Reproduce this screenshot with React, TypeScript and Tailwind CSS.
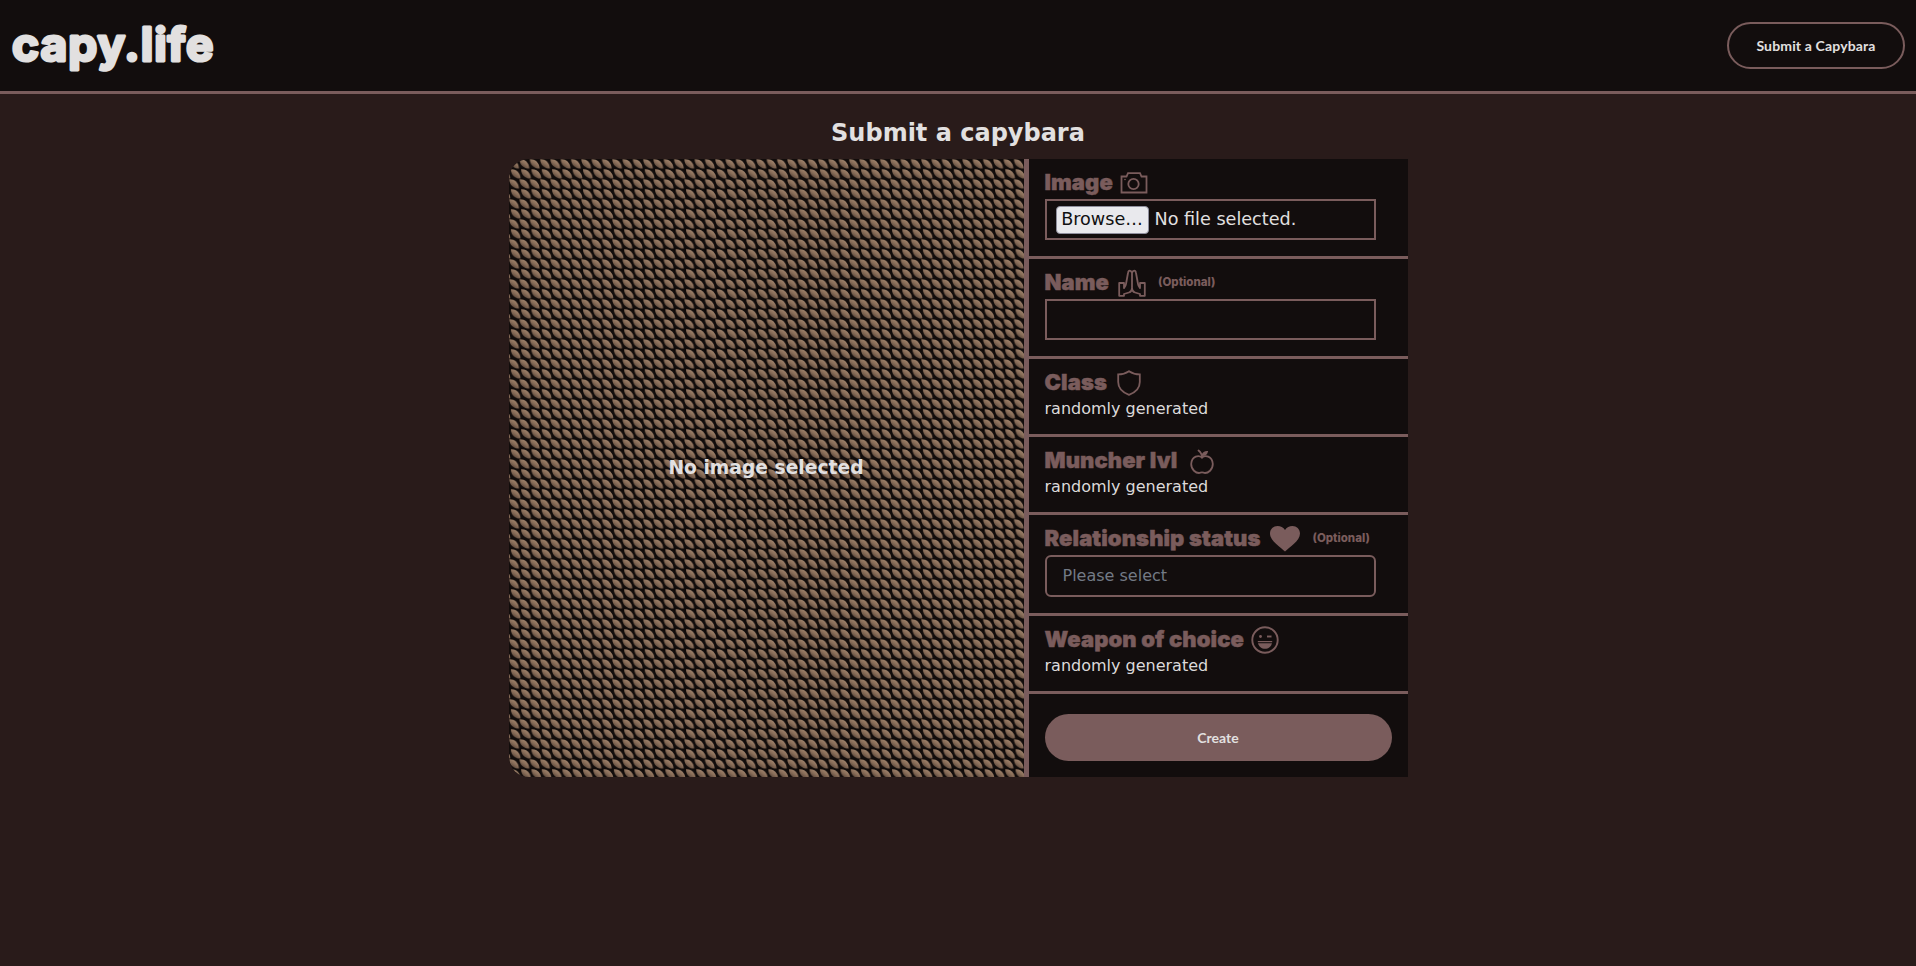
import type { ReactNode } from 'react';

const iconClass = 'text-[#7a5c5c] shrink-0';

function CameraIcon() {
  return (
    <svg width="28" height="22" viewBox="0 0 28 22" fill="none" stroke="currentColor" strokeWidth="1.8" className={`${iconClass} ml-[-3px]`}>
      <path d="M1.5 20.5V4.5H6.5L8 1.2H20L21.5 4.5H26.5V20.5Z" />
      <circle cx="13.5" cy="12" r="5.2" />
      <circle cx="5" cy="7.5" r="0.8" fill="currentColor" stroke="none" />
    </svg>
  );
}

function HandsIcon() {
  return (
    <svg width="28" height="28" viewBox="0 0 28 28" fill="none" stroke="currentColor" strokeWidth="1.8" strokeLinejoin="round" className={`${iconClass} ml-[-1px]`}>
      <path d="M14 4C13 1 10.5 .8 10 4L8 15C7.8 17 7 18 6 19V14H1.2V26.8H6V25L11 23.5C13 23 14 21 14 19Z" />
      <path d="M14 4C15 1 17.5 .8 18 4L20 15C20.2 17 21 18 22 19V14H26.8V26.8H22V25L17 23.5C15 23 14 21 14 19" />
    </svg>
  );
}

function ShieldIcon() {
  return (
    <svg width="24" height="26" viewBox="0 0 24 26" fill="none" stroke="currentColor" strokeWidth="1.8" className={iconClass}>
      <path d="M12 1.2C15 3.2 19 4.4 22.8 4.4V12C22.8 18 18 22.6 12 24.8C6 22.6 1.2 18 1.2 12V4.4C5 4.4 9 3.2 12 1.2Z" />
    </svg>
  );
}

function AppleIcon() {
  return (
    <svg width="24" height="25" viewBox="0 0 24 25" fill="none" stroke="currentColor" strokeWidth="1.8" strokeLinecap="round" className={`${iconClass} ml-[3px]`}>
      <path d="M12 8.5C9 6 1.8 6.5 1.2 15C1.2 21 6 24 9 24C10 24 11 23.4 12 23.4C13 23.4 14 24 15 24C18 24 22.8 21 22.8 15C22.2 6.5 15 6 12 8.5Z" />
      <path d="M12 8.5C12 5.5 10.5 3 8.5 1.5" />
      <path d="M12.5 6C13.5 3.5 15 2.8 17 2.8C16.5 4.8 15 6 12.5 6Z" fill="currentColor" />
    </svg>
  );
}

function HeartIcon() {
  return (
    <svg width="30" height="26" viewBox="0 0 30 26" fill="currentColor" className={iconClass}>
      <path d="M15 25.5C11 21.5 0 15 0 7.5C0 3 3.5 0 7.5 0C10.5 0 13.5 1.5 15 4C16.5 1.5 19.5 0 22.5 0C26.5 0 30 3 30 7.5C30 15 19 21.5 15 25.5Z" />
    </svg>
  );
}

function WinkIcon() {
  return (
    <svg width="28" height="28" viewBox="0 0 28 28" fill="none" stroke="currentColor" strokeWidth="1.9" className={`${iconClass} ml-[-3px]`}>
      <circle cx="14" cy="14" r="12.7" />
      <circle cx="9.5" cy="10.5" r="1.4" fill="currentColor" stroke="none" />
      <path d="M16 10.5H20.5" />
      <path d="M6.8 15.6H21.2" strokeWidth="1.2" />
      <path d="M7 17.2H21C20.2 20.6 17.4 22.8 14 22.8C10.6 22.8 7.8 20.6 7 17.2Z" fill="currentColor" stroke="none" />
    </svg>
  );
}

function Logo() {
  return (
    <svg width="212" height="74" viewBox="0 0 212 74" className="mt-[-3px] overflow-visible">
      <text
        x="2"
        y="54"
        fontFamily="Inter, sans-serif"
        fontWeight="700"
        fontSize="46"
        letterSpacing="1"
        fill="#e2e0e0"
        stroke="#e2e0e0"
        strokeWidth="3"
        strokeLinejoin="round"
      >
        capy.life
      </text>
    </svg>
  );
}

function Section({ label, icon, optional, children, className = '' }: { label: string; icon: ReactNode; optional?: boolean; children: ReactNode; className?: string }) {
  return (
    <div className={`border-b-[3px] border-[#7a5c5c] px-4 pt-2 ${className}`}>
      <div className="flex items-center gap-[10px] h-[32px] leading-none">
        <span className="mt-[-2px] font-['Inter',sans-serif] font-black text-[22px] tracking-[0.1px] text-[#7a5c5c] [-webkit-text-stroke:0.5px_#7a5c5c]">{label}</span>
        {icon}
        {optional && (
          <span className="ml-[2px] font-['Inter',sans-serif] font-extrabold text-[11.5px] text-[#7a5c5c]">(Optional)</span>
        )}
      </div>
      {children}
    </div>
  );
}

function Generated() {
  return <div className="leading-[20px] text-[#dcdada]">randomly generated</div>;
}

export default function App() {
  return (
    <div className="min-h-[966px] bg-[#291b1a] font-['DejaVu_Sans',sans-serif] text-[#e2e0e0]">
      <header className="h-[94px] bg-[#120d0d] border-b-[3px] border-[#7a5c5c] pl-[10px] pr-[11px] flex items-center justify-between">
        <Logo />
        <button className="w-[178px] h-[47px] rounded-full border-2 border-[#7a5c5c] font-['Lato',sans-serif] font-bold text-sm tracking-[0.15px]">
          Submit a Capybara
        </button>
      </header>

      <h2 className="text-center font-bold text-2xl h-[65px] pt-[13px] leading-[52px]">Submit a capybara</h2>

      <main className="w-[899px] mx-auto flex h-[618px]">
        <div className="relative w-[515px] rounded-l-[20px] overflow-hidden flex items-center justify-center bg-[#110c0b]">
          <svg className="absolute inset-0 w-full h-full">
            <defs>
              <linearGradient id="leaf" x1="0.8" y1="0" x2="0.1" y2="0.95">
                <stop offset="0" stopColor="#b09278" />
                <stop offset="0.5" stopColor="#866b57" />
                <stop offset="1" stopColor="#3e3028" />
              </linearGradient>
              <pattern id="scales" width="10.3" height="20" patternUnits="userSpaceOnUse">
                <path d="M.3 .3C5 0 9.8 3.2 10 9.6C5 9.8 .1 6 .3 .3Z" fill="url(#leaf)" />
                <path d="M1.9 10.3C6.6 10 11.4 13.2 11.6 19.6C6.6 19.8 1.7 16 1.9 10.3Z" fill="url(#leaf)" />
                <path d="M-8.4 10.3C-3.7 10 1.1 13.2 1.3 19.6C-3.7 19.8 -8.6 16 -8.4 10.3Z" fill="url(#leaf)" />
              </pattern>
            </defs>
            <rect width="100%" height="100%" fill="url(#scales)" />
          </svg>
          <span className="relative font-bold text-[18.72px] mt-[1px]">No image selected</span>
        </div>

        <div className="w-[5px] bg-[#7a5c5c]" />

        <div className="w-[379px] bg-[#120d0d] flex flex-col">
          <Section label="Image" icon={<CameraIcon />} className="h-[100px]">
            <div className="w-[331px] h-[41px] border-2 border-[#7a5c5c] flex items-center pl-[9px] gap-[6px] text-[17.6px]">
              <span className="w-[93px] h-[28px] rounded bg-[#e9e9ed] border border-[#8f8f9d] text-[#111] flex items-center justify-center">Browse…</span>
              <span>No file selected.</span>
            </div>
          </Section>
          <Section label="Name" icon={<HandsIcon />} optional className="h-[100px]">
            <div className="w-[331px] h-[41px] border-2 border-[#7a5c5c]" />
          </Section>
          <Section label="Class" icon={<ShieldIcon />} className="h-[78px]">
            <Generated />
          </Section>
          <Section label="Muncher lvl" icon={<AppleIcon />} className="h-[78px]">
            <Generated />
          </Section>
          <Section label="Relationship status" icon={<HeartIcon />} optional className="h-[101px]">
            <div className="w-[331px] h-[42px] rounded-md border-2 border-[#7a5c5c] flex items-center px-4 text-[#737a85]">Please select</div>
          </Section>
          <Section label="Weapon of choice" icon={<WinkIcon />} className="h-[78px]">
            <Generated />
          </Section>
          <div className="flex-1 px-4 pt-5">
            <button className="w-full h-[47px] rounded-full bg-[#7a5c5c] font-['Lato',sans-serif] font-bold text-sm">Create</button>
          </div>
        </div>
      </main>
    </div>
  );
}
